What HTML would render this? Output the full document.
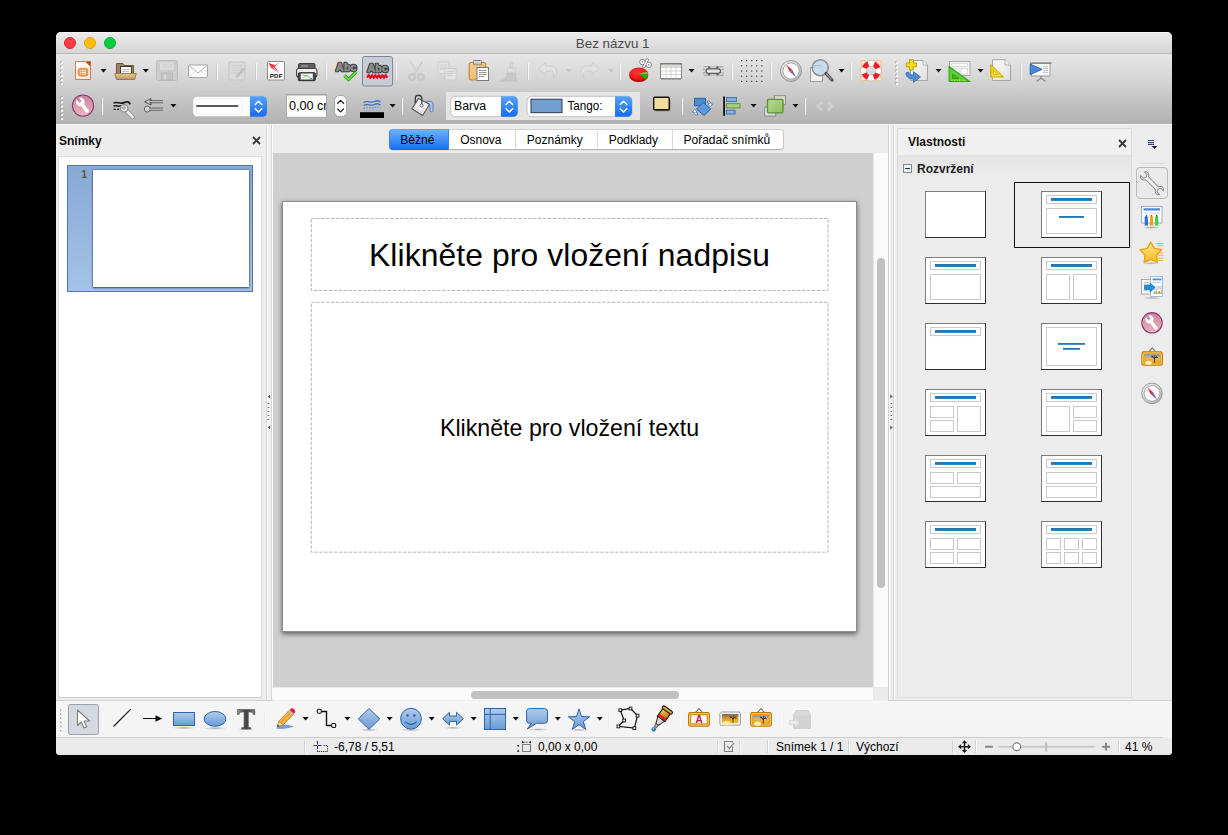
<!DOCTYPE html>
<html lang="cs">
<head>
<meta charset="utf-8">
<title>Bez názvu 1</title>
<style>
*{box-sizing:border-box;margin:0;padding:0}
html,body{width:1228px;height:835px;background:#000;overflow:hidden}
body{font-family:"Liberation Sans",sans-serif;font-size:12px;color:#000;position:relative}
.abs{position:absolute}
#win{position:absolute;left:56px;top:32px;width:1116px;height:723px;background:#ededed;border-radius:5px 5px 4px 4px;overflow:hidden}
/* everything inside #win is positioned in page coordinates via this shim */
#pg{position:absolute;left:-56px;top:-32px;width:1228px;height:835px}
#titlebar{left:56px;top:32px;width:1116px;height:22px;background:linear-gradient(#ebebeb,#d5d5d5);border-bottom:1px solid #b9b9b9;border-top:1px solid #f4f4f4}
#title{left:54.700px;top:32.500px;width:1116px;height:22px;line-height:22px;text-align:center;font-size:13.400px;color:#4b4b4b}
.tl{width:12px;height:12px;border-radius:6px;top:37px}
#toolbars{left:56px;top:54px;width:1116px;height:70px;background:linear-gradient(#e6e6e6 0%,#d6d6d6 35%,#c2c2c2 70%,#b2b2b2 100%)}
.sep{width:1px;background:#f4f4f4;box-shadow:-1px 0 0 rgba(0,0,0,.10)}
.dd{width:0;height:0;border-left:3.5px solid transparent;border-right:3.5px solid transparent;border-top:4px solid #111}
.dd.dis{border-top-color:#aaa}
.grip{width:3px;background-image:radial-gradient(circle,#fff 0.9px,rgba(0,0,0,0) 1.1px);background-size:3px 3px}
svg{position:absolute;overflow:visible}
.tabt{top:130px;height:21px;line-height:21px;text-align:center;font-size:12px;color:#000;margin-left:-1.200px}
.ssep{top:740px;width:1px;height:13px;background:#d2d2d2;box-shadow:1px 0 0 #fbfbfb}
.st{top:739.500px;height:15px;line-height:15px;font-size:12px;color:#000;white-space:nowrap}
.ph{border:1px dashed #c8c8c8}
</style>
</head>
<body>
<div id="win"><div id="pg">

<!-- ===== title bar ===== -->
<div id="titlebar" class="abs"></div>
<div id="title" class="abs">Bez názvu 1</div>
<div class="abs tl" style="left:64px;background:#fc3c45;border:1px solid #e3242f"></div>
<div class="abs tl" style="left:84px;background:#fdbd08;border:1px solid #e2a005"></div>
<div class="abs tl" style="left:104px;background:#05cf40;border:1px solid #12ad2e"></div>

<!-- ===== toolbars ===== -->
<div id="toolbars" class="abs"></div>
<svg style="left:0;top:0" width="1228" height="835" viewBox="0 0 1228 835"><defs>
<linearGradient id="gdoc" x1="0" y1="0" x2="1" y2="1"><stop offset="0" stop-color="#fff"/><stop offset="1" stop-color="#fcebdf"/></linearGradient>
<linearGradient id="gfold" x1="0" y1="0" x2="0" y2="1"><stop offset="0" stop-color="#e0cba4"/><stop offset="1" stop-color="#b69763"/></linearGradient>
<linearGradient id="gpap" x1="0" y1="0" x2="1" y2="1"><stop offset="0" stop-color="#fdfdfd"/><stop offset="1" stop-color="#dedede"/></linearGradient>
<linearGradient id="gblue" x1="0" y1="0" x2="0" y2="1"><stop offset="0" stop-color="#55a2fc"/><stop offset="1" stop-color="#176bf5"/></linearGradient>
<linearGradient id="gpink" x1="0" y1="0" x2="0" y2="1"><stop offset="0" stop-color="#c8869f"/><stop offset="1" stop-color="#ecb2c0"/></linearGradient>
<linearGradient id="gclip" x1="0" y1="0" x2="1" y2="1"><stop offset="0" stop-color="#f5cf8e"/><stop offset="1" stop-color="#e9b35c"/></linearGradient>
<linearGradient id="ggreen" x1="0" y1="0" x2="1" y2="1"><stop offset="0" stop-color="#b5d98f"/><stop offset="1" stop-color="#8fc063"/></linearGradient>
<linearGradient id="gbl2" x1="0" y1="0" x2="0" y2="1"><stop offset="0" stop-color="#8fb8e6"/><stop offset="1" stop-color="#5e95d3"/></linearGradient>
<radialGradient id="gpie" cx=".4" cy=".35" r=".7"><stop offset="0" stop-color="#ff3a3a"/><stop offset="1" stop-color="#e30606"/></radialGradient>
<linearGradient id="gsilver" x1="0" y1="0" x2="1" y2="1"><stop offset="0" stop-color="#f4f4f4"/><stop offset="1" stop-color="#a9a9a9"/></linearGradient>
</defs>
<rect x="60.3" y="61.3" width="2" height="2" fill="#777" fill-opacity=".55"/><rect x="61.1" y="62.1" width="2" height="2" fill="#fff"/><rect x="60.3" y="65.5" width="2" height="2" fill="#777" fill-opacity=".55"/><rect x="61.1" y="66.3" width="2" height="2" fill="#fff"/><rect x="60.3" y="69.7" width="2" height="2" fill="#777" fill-opacity=".55"/><rect x="61.1" y="70.5" width="2" height="2" fill="#fff"/><rect x="60.3" y="73.9" width="2" height="2" fill="#777" fill-opacity=".55"/><rect x="61.1" y="74.7" width="2" height="2" fill="#fff"/><rect x="60.3" y="78.1" width="2" height="2" fill="#777" fill-opacity=".55"/><rect x="61.1" y="78.9" width="2" height="2" fill="#fff"/><rect x="60.3" y="82.3" width="2" height="2" fill="#777" fill-opacity=".55"/><rect x="61.1" y="83.1" width="2" height="2" fill="#fff"/>
<g transform="translate(75 61)"><path d="M.5.5H10.500L15.500 5.500V18.500H.5z" fill="url(#gdoc)" stroke="#c8703a" stroke-width=".9"/><path d="M10.500 .2H15.800V5.500z" fill="#c2470d"/><rect x="3" y="7.200" width="10" height="8" rx="2.200" fill="#f19459" stroke="#e87a3a" stroke-width=".6"/><path d="M6.500 9.700H11M6.500 11.400H11M6.500 13.100H11" stroke="#fff" stroke-width=".9"/><path d="M4.800 9.700h.9M4.800 11.400h.9M4.800 13.100h.9" stroke="#fff" stroke-width=".9"/></g>
<path d="M100.5 69h6l-3 3.600z" fill="#0a0a0a"/>
<g transform="translate(114 62)"><path d="M2.500 1.500H9L10.500 3.500H19.500V16H2.500z" fill="#9c825f" stroke="#6e5633"/><rect x="6.500" y="4.500" width="11" height="9.500" fill="#fff" stroke="#3c3c3c"/><path d="M8.500 7.500H15.500M8.500 9.500H15.500M8.500 11.500H15.500" stroke="#b9c2b5" stroke-width="1"/><path d="M.8 11.500H22.200L20.600 17.500H2.400z" fill="url(#gfold)" stroke="#a87a2e"/></g>
<path d="M142.8 69h6l-3 3.600z" fill="#0a0a0a"/>
<g transform="translate(156 60)"><rect x=".5" y=".5" width="21" height="20" rx="2" fill="#cdcdcd" stroke="#bcbcbc"/><rect x="3.500" y="1.500" width="15" height="9" rx="1" fill="#dadada" stroke="#c6c6c6" stroke-width=".7"/><path d="M6 4.500H16M6 6.500H16" stroke="#cfcfcf" stroke-width=".8"/><rect x="5.500" y="13" width="11" height="7" fill="#c3c3c3" stroke="#b3b3b3" stroke-width=".7"/><rect x="7.500" y="14.500" width="2.500" height="5" fill="#d6d6d6"/></g>
<g transform="translate(188 64.5)"><rect x=".5" y=".5" width="19" height="12.500" rx="1" fill="#fbfbfb" stroke="#a6a6a6"/><path d="M1.500 1.500L10 8.500L18.500 1.500" fill="none" stroke="#b3b3b3" stroke-width="1"/><path d="M1.500 12L7 6.500M18.500 12L13 6.500" stroke="#dcdcdc" stroke-width=".8"/></g>
<path d="M217.5 63V80" stroke="#f6f6f6" stroke-width="1.200"/><path d="M216.5 63V80" stroke="#000" stroke-opacity=".07" stroke-width="1"/>
<g transform="translate(228.5 61.5)"><rect x=".5" y=".5" width="16" height="18" rx="1" fill="#dadada" stroke="#c5c5c5"/><path d="M3 4H13M3 6.500H13M3 9H11M3 11.500H9" stroke="#c9c9c9" stroke-width=".8"/><path d="M8 14L14.500 6.500L16 8L9.500 15.200L7.500 15.800z" fill="#c4c4c4" stroke="#b4b4b4" stroke-width=".6"/></g>
<path d="M256.5 63V80" stroke="#f6f6f6" stroke-width="1.200"/><path d="M255.5 63V80" stroke="#000" stroke-opacity=".07" stroke-width="1"/>
<g transform="translate(267 61)"><rect x=".5" y=".5" width="17" height="18.500" rx="1" fill="#fdfdfd" stroke="#8a8a82"/><path d="M1.500 2.200C6 3.500 9 6 12 11.500C9.500 8 6 5.500 1.500 2.200z" fill="#e6001f"/><path d="M1.500 2L9.500 4.500L6 6.500L12.500 12L4 7z" fill="#f0102a" fill-opacity=".75"/><path d="M5 6.500L11.500 2.200" stroke="#f55" stroke-width="1" stroke-opacity=".7"/><text x="9.300" y="17.300" font-family="Liberation Sans" font-weight="bold" font-size="6.200" text-anchor="middle" fill="#111" letter-spacing=".3">PDF</text></g>
<g transform="translate(296 63)"><rect x="2.500" y=".5" width="16.500" height="7" rx="1.200" fill="#5d615f" stroke="#3a3d3c"/><path d="M5.500 3H12" stroke="#b9bdbb" stroke-width="1.300" stroke-dasharray="1.200 .8"/><rect x=".6" y="5.500" width="20.300" height="8.500" rx="2" fill="#efefef" stroke="#3f4241" stroke-width="1.100"/><rect x="2.300" y="9.700" width="17" height="8" rx="1.200" fill="#484b4a" stroke="#2b2d2c"/><rect x="4.800" y="10.500" width="12" height="6" fill="#f7f8f6"/><path d="M6.500 11.800L14.500 14.500M7 14.500L12 12" stroke="#86cf7a" stroke-width="1"/><rect x="13.800" y="15" width="2.200" height="1.200" fill="#3a9ae8"/></g>
<path d="M326.5 63V80" stroke="#f6f6f6" stroke-width="1.200"/><path d="M325.5 63V80" stroke="#000" stroke-opacity=".07" stroke-width="1"/>
<text x="336.1" y="71" font-family="Liberation Sans" font-weight="bold" font-size="10.6" letter-spacing="0.15" fill="#2b2d2c" stroke="#2b2d2c" stroke-width="2.7" stroke-linejoin="round">Abc</text><text x="336.1" y="71" font-family="Liberation Sans" font-weight="bold" font-size="10.6" letter-spacing="0.15" fill="#8b8e8c" stroke="#8b8e8c" stroke-width=".8">Abc</text><path d="M344.500 75.500L348.500 79.500L356 72.200" fill="none" stroke="#2a9a1a" stroke-width="3.200"/><path d="M344.500 75.500L348.500 79.500L356 72.200" fill="none" stroke="#6fe04a" stroke-width="1.600"/>
<rect x="362.500" y="56.500" width="30" height="29.500" rx="2" fill="#c8ccd4" stroke="#7f8695"/>
<text x="367.5" y="72" font-family="Liberation Sans" font-weight="bold" font-size="10.6" letter-spacing="0.15" fill="#2b2d2c" stroke="#2b2d2c" stroke-width="2.7" stroke-linejoin="round">Abc</text><text x="367.5" y="72" font-family="Liberation Sans" font-weight="bold" font-size="10.6" letter-spacing="0.15" fill="#8b8e8c" stroke="#8b8e8c" stroke-width=".8">Abc</text><path d="M367 77.700l1.700-2.400 1.700 2.400 1.700-2.400 1.700 2.400 1.700-2.400 1.700 2.400 1.700-2.400 1.700 2.400 1.700-2.400 1.700 2.400 1.700-2.400 1.700 2.400" fill="none" stroke="#e8001c" stroke-width="2"/>
<path d="M396.5 63V80" stroke="#f6f6f6" stroke-width="1.200"/><path d="M395.5 63V80" stroke="#000" stroke-opacity=".07" stroke-width="1"/>
<g transform="translate(408 61)"><path d="M2.500 .5L10.500 13M14.500 .5L6.500 13" stroke="#cfcfcf" stroke-width="1.600" fill="none"/><circle cx="4" cy="16" r="2.900" fill="none" stroke="#c4c4c4" stroke-width="1.900"/><circle cx="13" cy="16" r="2.900" fill="none" stroke="#c4c4c4" stroke-width="1.900"/></g>
<g transform="translate(437.5 61.5)"><rect x=".5" y=".5" width="11" height="11.500" fill="#e3e3e3" stroke="#cdcdcd"/><path d="M2.500 3.500H9.500M2.500 5.500H9.500M2.500 7.500H8" stroke="#c6c6c6" stroke-width=".8"/><rect x="7.500" y="7" width="11" height="11.500" fill="#e3e3e3" stroke="#cdcdcd"/><path d="M9.500 10H16.500M9.500 12H16.500M9.500 14H15" stroke="#c6c6c6" stroke-width=".8"/></g>
<g transform="translate(468.5 60)"><rect x=".7" y="2.500" width="16.500" height="17.500" rx="2" fill="url(#gclip)" stroke="#c4892e" stroke-width="1.200"/><rect x="5" y=".5" width="8" height="4" rx="1" fill="#d9d9d9" stroke="#777"/><rect x="4.500" y="3.500" width="9" height="1.700" fill="#9a9a9a"/><rect x="8.500" y="7.500" width="11.500" height="13" fill="#fdfdfd" stroke="#7a7a7a"/><path d="M10.500 10.500H18M10.500 12.500H18M10.500 14.500H18M10.500 16.500H15.500" stroke="#8d8d8d" stroke-width=".9"/></g>
<g transform="translate(499 61)"><path d="M12.500 .5L14.300 2.500L13.800 7H10.800L11 2.500z" fill="#d6d6d6" stroke="#c8c8c8" stroke-width=".6"/><path d="M8.500 7H16.500V12H8.500z" fill="#dedede" stroke="#cacaca" stroke-width=".7"/><path d="M8.500 12H16.500C16.500 15 17 18 17.500 20.500C12 19.500 6 20.500 .5 20.500C5.500 19 8.500 16 8.500 12z" fill="#c8c8c8" stroke="#bdbdbd" stroke-width=".5"/></g>
<path d="M528.5 63V80" stroke="#f6f6f6" stroke-width="1.200"/><path d="M527.5 63V80" stroke="#000" stroke-opacity=".07" stroke-width="1"/>
<g transform="translate(537.5 62)"><path d="M8 .8L.8 6.500L8 12.200V9.200H13C16.500 9.200 17.500 11.500 15.500 15.800C21 12.500 20.500 4 13 3.800H8z" fill="#e1e1e1" stroke="#cbcbcb" stroke-width=".9"/></g>
<path d="M566 69h6l-3 3.600z" fill="#c6c6c6"/>
<g transform="translate(578.5 62)"><path d="M8 .8L.8 6.500L8 12.200V9.200H13C16.500 9.200 17.500 11.500 15.500 15.800C21 12.500 20.500 4 13 3.800H8z" transform="translate(21.500 0) scale(-1 1)" fill="#e1e1e1" stroke="#cbcbcb" stroke-width=".9"/></g>
<path d="M608 69h6l-3 3.600z" fill="#c6c6c6"/>
<path d="M620.5 63V80" stroke="#f6f6f6" stroke-width="1.200"/><path d="M619.5 63V80" stroke="#000" stroke-opacity=".07" stroke-width="1"/>
<ellipse cx="638.700" cy="75.800" rx="9.500" ry="6.300" fill="#b80404"/><ellipse cx="638.700" cy="74" rx="9.500" ry="6.500" fill="url(#gpie)"/><path d="M638.500 73.500L647.900 73.800C648.300 76 647 78.500 645.500 79.200z" fill="#22b010"/><path d="M638.500 73.500L647.900 73.800L647.200 72z" fill="#7fe85a"/>
<g fill="none" stroke="#767676" stroke-width="3" stroke-linecap="round"><circle cx="642.4" cy="62" r="1.5"/><circle cx="648.7" cy="64.7" r="1.5"/><path d="M647.3 59.9L643.8 66.8"/></g><g fill="none" stroke="#fff" stroke-width="1.5" stroke-linecap="round"><circle cx="642.4" cy="62" r="1.5"/><circle cx="648.7" cy="64.7" r="1.5"/><path d="M647.3 59.9L643.8 66.8"/></g>
<g transform="translate(660 63)"><rect x=".5" y=".5" width="21" height="15" fill="#fff" stroke="#8b8b86" stroke-width="1"/><rect x="1" y="1" width="20" height="3" fill="#dcdcd8"/><path d="M.5 1H21.5" stroke="#6f6f6a" stroke-width="1"/><path d="M1 4.500H21M1 8H21M1 11.500H21M6 1V15.500M11 1V15.500M16 1V15.500" stroke="#cbcbc6" stroke-width=".8"/><path d="M.5 16.300H21.500" stroke="#777" stroke-opacity=".6"/></g>
<path d="M688.6 69h6l-3 3.600z" fill="#0a0a0a"/>
<path d="M703.5 66.7H708M718.5 66.7H723.5M703.5 75.2H708M718.5 75.2H723.5" stroke="#6b6f6c" stroke-width="1.1" stroke-opacity=".6"/><path d="M708 66.7H718.5M708 75.2H718.5" stroke="#6b6f6c" stroke-width="1.1" stroke-opacity=".35"/><path d="M703 69.3H705.3M721.2 69.3H724M703 72.9H705.3M721.2 72.9H724" stroke="#9a9d9a" stroke-width="1"/><path d="M708.3 66.7L710.6 69M718.2 66.7L715.9 69M708.3 75.2L710.6 73.2M718.2 75.2L715.9 73.2" stroke="#5e625f" stroke-width="1.7"/><rect x="706" y="68.8" width="14.5" height="4.6" rx="2.3" fill="#e6e6e6" stroke="#5a5e5b" stroke-width="1.3"/>
<path d="M732.5 63V80" stroke="#f6f6f6" stroke-width="1.200"/><path d="M731.5 63V80" stroke="#000" stroke-opacity=".07" stroke-width="1"/>
<rect x="741.0" y="60.0" width="1.200" height="1.200" fill="#3e3e3e"/><rect x="741.0" y="65.2" width="1.200" height="1.200" fill="#3e3e3e"/><rect x="741.0" y="70.4" width="1.200" height="1.200" fill="#3e3e3e"/><rect x="741.0" y="75.6" width="1.200" height="1.200" fill="#3e3e3e"/><rect x="741.0" y="80.8" width="1.200" height="1.200" fill="#3e3e3e"/><rect x="746.0" y="60.0" width="1.200" height="1.200" fill="#3e3e3e"/><rect x="746.0" y="65.2" width="1.200" height="1.200" fill="#3e3e3e"/><rect x="746.0" y="70.4" width="1.200" height="1.200" fill="#3e3e3e"/><rect x="746.0" y="75.6" width="1.200" height="1.200" fill="#3e3e3e"/><rect x="746.0" y="80.8" width="1.200" height="1.200" fill="#3e3e3e"/><rect x="751.1" y="60.0" width="1.200" height="1.200" fill="#3e3e3e"/><rect x="751.1" y="65.2" width="1.200" height="1.200" fill="#3e3e3e"/><rect x="751.1" y="70.4" width="1.200" height="1.200" fill="#3e3e3e"/><rect x="751.1" y="75.6" width="1.200" height="1.200" fill="#3e3e3e"/><rect x="751.1" y="80.8" width="1.200" height="1.200" fill="#3e3e3e"/><rect x="756.1" y="60.0" width="1.200" height="1.200" fill="#3e3e3e"/><rect x="756.1" y="65.2" width="1.200" height="1.200" fill="#3e3e3e"/><rect x="756.1" y="70.4" width="1.200" height="1.200" fill="#3e3e3e"/><rect x="756.1" y="75.6" width="1.200" height="1.200" fill="#3e3e3e"/><rect x="756.1" y="80.8" width="1.200" height="1.200" fill="#3e3e3e"/><rect x="761.2" y="60.0" width="1.200" height="1.200" fill="#3e3e3e"/><rect x="761.2" y="65.2" width="1.200" height="1.200" fill="#3e3e3e"/><rect x="761.2" y="70.4" width="1.200" height="1.200" fill="#3e3e3e"/><rect x="761.2" y="75.6" width="1.200" height="1.200" fill="#3e3e3e"/><rect x="761.2" y="80.8" width="1.200" height="1.200" fill="#3e3e3e"/>
<path d="M771.5 63V80" stroke="#f6f6f6" stroke-width="1.200"/><path d="M770.5 63V80" stroke="#000" stroke-opacity=".07" stroke-width="1"/>
<circle cx="791" cy="71" r="10.5" fill="url(#gsilver)" stroke="#8e8e8e" stroke-width=".8"/><circle cx="791" cy="71" r="8.1" fill="#fcfcfc" stroke="#a5a5a5" stroke-width=".9"/><path d="M786.2 64.8L792.2 70.1L789.9 72.1z" fill="#e8222a"/><path d="M795.8 77.2L792.2 70.1L789.9 72.1z" fill="#5b7fd0"/><path d="M795.8 77.2L792.2 70.1L791 71z" fill="#b0529a"/>
<g transform="translate(810 59)"><path d="M.5 8.500H9L12.500 12V22.500H.5z" fill="#f1f1f1" stroke="#9c9c9c"/><circle cx="10.300" cy="8.700" r="8" fill="#c6d9ee" fill-opacity=".85" stroke="#8a8f92" stroke-width="1.600"/><path d="M4 6.500H11L13 8.500" fill="none" stroke="#a9bdd4" stroke-width=".9"/><path d="M16 14.500L22 21" stroke="#4b4b4b" stroke-width="3.200" stroke-linecap="round"/><path d="M16.500 15L21.500 20.500" stroke="#a0a0a0" stroke-width="1.200" stroke-linecap="round" stroke-dasharray="1 1"/></g>
<path d="M838.5 69h6l-3 3.600z" fill="#0a0a0a"/>
<path d="M851.5 63V80" stroke="#f6f6f6" stroke-width="1.200"/><path d="M850.5 63V80" stroke="#000" stroke-opacity=".07" stroke-width="1"/>
<circle cx="871" cy="70.700" r="10.400" fill="#fde6c8" stroke="#f0b060" stroke-width=".8" fill-opacity=".0"/><circle cx="863.3" cy="63" r="2.700" fill="#fbe7cf" stroke="#f1b56a" stroke-width=".9"/><circle cx="878.7" cy="63" r="2.700" fill="#fbe7cf" stroke="#f1b56a" stroke-width=".9"/><circle cx="863.3" cy="78.4" r="2.700" fill="#fbe7cf" stroke="#f1b56a" stroke-width=".9"/><circle cx="878.7" cy="78.4" r="2.700" fill="#fbe7cf" stroke="#f1b56a" stroke-width=".9"/><circle cx="871" cy="70.700" r="7.300" fill="none" stroke="#fff" stroke-width="5.600"/><circle cx="871" cy="70.700" r="7.300" fill="none" stroke="#ee1c24" stroke-width="5.600" stroke-dasharray="5.730 5.730" stroke-dashoffset="-2.870"/><circle cx="871" cy="70.700" r="10.200" fill="none" stroke="#c9c9c9" stroke-width=".7"/><circle cx="871" cy="70.700" r="4.400" fill="none" stroke="#bdbdbd" stroke-width=".8"/>
<rect x="895.3" y="61.3" width="2" height="2" fill="#777" fill-opacity=".55"/><rect x="896.1" y="62.1" width="2" height="2" fill="#fff"/><rect x="895.3" y="65.5" width="2" height="2" fill="#777" fill-opacity=".55"/><rect x="896.1" y="66.3" width="2" height="2" fill="#fff"/><rect x="895.3" y="69.7" width="2" height="2" fill="#777" fill-opacity=".55"/><rect x="896.1" y="70.5" width="2" height="2" fill="#fff"/><rect x="895.3" y="73.9" width="2" height="2" fill="#777" fill-opacity=".55"/><rect x="896.1" y="74.7" width="2" height="2" fill="#fff"/><rect x="895.3" y="78.1" width="2" height="2" fill="#777" fill-opacity=".55"/><rect x="896.1" y="78.9" width="2" height="2" fill="#fff"/><rect x="895.3" y="82.3" width="2" height="2" fill="#777" fill-opacity=".55"/><rect x="896.1" y="83.1" width="2" height="2" fill="#fff"/>
<g transform="translate(905 59)"><path d="M5.500 1.500H18L22.500 6V21.500H5.500z" fill="url(#gpap)" stroke="#a5a5a5"/><path d="M18 1.500V6H22.500" fill="#f6f6f6" stroke="#a5a5a5" stroke-width=".8"/><path d="M1 11.500C1 15 3.500 17.500 8.500 17.500V20.800L15.500 15.500L8.500 10.200V13.500C5.500 13.500 4 12.500 3.800 10.500z" transform="translate(0 2.500)" fill="#4b8fd6" stroke="#2c63a8" stroke-width=".8"/><path d="M4.500 .7H8.300V4H11.600V7.800H8.300V11H4.500V7.800H1.200V4H4.500z" fill="#f6dc1e" stroke="#b59b00" stroke-width=".9"/></g>
<path d="M935.6 69h6l-3 3.600z" fill="#0a0a0a"/>
<g transform="translate(948.5 61)"><rect x="1" y=".5" width="20.500" height="14" fill="#f4f4f4" stroke="#ababab"/><rect x="3.500" y="2.500" width="15.500" height="3" fill="#fbfbfb" stroke="#d0d0d0" stroke-width=".7"/><rect x="3.500" y="7.500" width="7" height="5.500" fill="#fbfbfb" stroke="#d0d0d0" stroke-width=".7"/><rect x="12.500" y="7.500" width="6.500" height="5.500" fill="#fbfbfb" stroke="#d0d0d0" stroke-width=".7"/><path d="M.6 5.500L21 20.500H.6z" fill="#5fd038" stroke="#2fa414" stroke-width="1.100"/><path d="M4 13L10.500 17.500H4z" fill="#42b322" stroke="#2a8f10" stroke-width=".7"/><path d="M3 19.300H17" stroke="#d8e85a" stroke-width="1" stroke-dasharray="1 1.500"/></g>
<path d="M977.6 69h6l-3 3.600z" fill="#0a0a0a"/>
<g transform="translate(990 59)"><path d="M2.500 .7H15L20.500 6V21.500H2.500z" fill="url(#gpap)" stroke="#a5a5a5"/><path d="M15 .7V6H20.500" fill="#f4f4f4" stroke="#a5a5a5" stroke-width=".8"/><path d="M.8 5.500L13.500 18H.8z" fill="#f1d420" stroke="#c9a400" stroke-width="1"/><path d="M3.500 11.500L7.500 15.500H3.500z" fill="#f8e98a" stroke="#c9a400" stroke-width=".6"/><path d="M2.500 16.800H10" stroke="#fff6b0" stroke-width=".8" stroke-dasharray="1 1.200"/></g>
<path d="M1021.5 63V80" stroke="#f6f6f6" stroke-width="1.200"/><path d="M1020.5 63V80" stroke="#000" stroke-opacity=".07" stroke-width="1"/>
<g transform="translate(1029.5 62)"><rect x="2" y="1.500" width="18.500" height="12.500" fill="#f8f8f8" stroke="#9a9a98"/><rect x=".5" y=".3" width="21.500" height="1.700" fill="#8c8c8a"/><path d="M13.500 4.500H18.500M13.500 6.500H18.500M13.500 8.500H18.500M13.500 10.500H18.500" stroke="#b9b9b9" stroke-width=".8"/><path d="M.7 2.200L12.500 7.300L.7 12.600z" fill="#4a8ad8" stroke="#1e5fb4" stroke-width=".9"/><path d="M11.500 14V16.500M11.500 16L7 19.500M11.500 16L16 19.500" stroke="#8a8a88" stroke-width="1.300" fill="none"/></g>

<rect x="60.3" y="96.3" width="2" height="2" fill="#777" fill-opacity=".55"/><rect x="61.1" y="97.1" width="2" height="2" fill="#fff"/><rect x="60.3" y="100.5" width="2" height="2" fill="#777" fill-opacity=".55"/><rect x="61.1" y="101.3" width="2" height="2" fill="#fff"/><rect x="60.3" y="104.7" width="2" height="2" fill="#777" fill-opacity=".55"/><rect x="61.1" y="105.5" width="2" height="2" fill="#fff"/><rect x="60.3" y="108.9" width="2" height="2" fill="#777" fill-opacity=".55"/><rect x="61.1" y="109.7" width="2" height="2" fill="#fff"/><rect x="60.3" y="113.1" width="2" height="2" fill="#777" fill-opacity=".55"/><rect x="61.1" y="113.9" width="2" height="2" fill="#fff"/><rect x="60.3" y="117.3" width="2" height="2" fill="#777" fill-opacity=".55"/><rect x="61.1" y="118.1" width="2" height="2" fill="#fff"/>
<circle cx="83" cy="105.6" r="10.6" fill="url(#gpink)" stroke="#8b3c72" stroke-width="1.100"/><g transform="translate(83 105.6) scale(1.0) rotate(-36)"><path d="M0 -3V6.800" stroke="#fff" stroke-width="3.500" stroke-linecap="round"/><circle cx="0" cy="-4.500" r="4.300" fill="#fff"/><path d="M0 -9.500V-4.300" stroke="#cd8ca4" stroke-width="2.900"/></g>
<path d="M102.5 98V115" stroke="#f6f6f6" stroke-width="1.200"/><path d="M101.5 98V115" stroke="#000" stroke-opacity=".07" stroke-width="1"/>
<path d="M113.500 103C117 101.300 120 104.200 124 102.600S128.800 101.800 130.300 104.300" fill="none" stroke="#1c1c1c" stroke-width="1.700"/><path d="M113.500 106.200C116 105 118.500 107 121.500 105.800" fill="none" stroke="#1c1c1c" stroke-width="1.500"/><path d="M113.500 109.400h2.200m1.300 0h2.200" stroke="#1c1c1c" stroke-width="1.300"/><path d="M126 110.300L132.600 117" stroke="#8e8e8e" stroke-width="4.600" stroke-linecap="round"/><path d="M126 110.300L132.600 117" stroke="#ececec" stroke-width="2.900" stroke-linecap="round"/><circle cx="124.200" cy="108.300" r="3.700" fill="#e6e6e6" stroke="#868686" stroke-width="1.200"/><circle cx="124" cy="108" r="1.300" fill="#bcbcbc" stroke="#858585" stroke-width=".7"/>
<g transform="translate(144 98.5)"><path d="M7 0L.6 3.300L7 6.600z" fill="#c9c9c9" stroke="#444" stroke-width=".9"/><path d="M5.500 2.400H19M5.500 4.200H19" stroke="#2e2e2e" stroke-width=".9"/><path d="M5.500 3.300H19" stroke="#d8d8d8" stroke-width=".9"/><circle cx="3.300" cy="10.600" r="2.900" fill="#d6d6d6" stroke="#555" stroke-width=".9"/><path d="M6 9.700H19M6 11.500H19" stroke="#2e2e2e" stroke-width=".9"/><path d="M6 10.600H19" stroke="#d8d8d8" stroke-width=".9"/></g>
<path d="M170.4 104h6l-3 3.600z" fill="#0a0a0a"/>
<rect x="192.8" y="96.3" width="74.2" height="20.4" rx="4.500" fill="#fff" stroke="#b5b5b5" stroke-width=".8"/><path d="M250 96.3H262.5a4.500 4.500 0 0 1 4.500 4.500V112.19999999999999a4.500 4.500 0 0 1 -4.500 4.500H250z" fill="url(#gblue)"/><path d="M255.2 104.5l3.300 -3.300l3.300 3.300M255.2 108.7l3.300 3.300l3.300 -3.300" fill="none" stroke="#fff" stroke-width="1.500" stroke-linecap="round" stroke-linejoin="round"/><rect x="196" y="98.500" width="46" height="15.500" fill="#fff" stroke="#ececec" stroke-width=".8"/><path d="M196.200 106H238.200" stroke="#5a5a5a" stroke-width="2"/>
<rect x="286.500" y="94.500" width="40" height="22.800" fill="#fff" stroke="#a9a9a9" stroke-width="1"/><path d="M287 95H326" stroke="#8f8f8f" stroke-width=".8"/>
<clipPath id="cpw"><rect x="287" y="95" width="39" height="22"/></clipPath><text clip-path="url(#cpw)" x="289" y="110.300" font-family="Liberation Sans" font-size="12.600" fill="#000">0,00 cm</text>
<rect x="334.600" y="95.500" width="12" height="21.200" rx="5" fill="#fdfdfd" stroke="#9d9d9d" stroke-width=".9"/><path d="M337.700 103.300l2.900 -2.900l2.900 2.900M337.700 109l2.900 2.900l2.900 -2.900" fill="none" stroke="#222" stroke-width="1.300" stroke-linecap="round" stroke-linejoin="round"/>
<g transform="translate(360 100)"><path d="M3.500 2.500C7 .3 11 3.300 14.500 1.500S18.500 1 20.500 2M3.500 5.500C7 3.300 11 6.300 14.500 4.500S18.500 4 20.500 5" fill="none" stroke="#3b78c4" stroke-width="1.300"/><path d="M3.500 8.500C7 6.500 11 9 14.500 7.500S18.500 7 20.500 8" fill="none" stroke="#5c92d4" stroke-width="1.100" stroke-dasharray="1.600 1.200"/><path d="M4 10.700H20" stroke="#7aa6dc" stroke-width=".9" stroke-dasharray="1 1.400"/><rect x="0" y="12.200" width="24" height="5.800" fill="#000"/></g>
<path d="M389.6 104h6l-3 3.600z" fill="#0a0a0a"/>
<path d="M402.5 98V115" stroke="#f6f6f6" stroke-width="1.200"/><path d="M401.5 98V115" stroke="#000" stroke-opacity=".07" stroke-width="1"/>
<g transform="translate(412 95)"><path d="M14 6.400H18.500Q21 6.400 21 9V15.600Q21 16.900 19.500 16.900Q18 16.900 18 15.600V10.500Q18 9.400 17 9.400H15z" fill="#a9c8f5" stroke="#5874bd" stroke-width=".9"/><path d="M6.400 3.600L17.500 9.200L10.600 20.500L-.1 13.800z" fill="#f0f0f0" stroke="#555" stroke-width="1.100" stroke-linejoin="round"/><path d="M2.500 12.500L9.500 17.500L12.500 13" fill="none" stroke="#dadada" stroke-width="1.500"/><path d="M3.300 8V3.500A3.250 3.250 0 0 1 9.800 3.500V10" fill="none" stroke="#3a4042" stroke-width="1.300"/><circle cx="9.600" cy="10.500" r="1.500" fill="#fff" stroke="#555" stroke-width=".9"/></g>
<rect x="446" y="92" width="194" height="28" fill="#e4e4e4"/>
<rect x="450.7" y="96.3" width="67" height="20.4" rx="4.500" fill="#fff" stroke="#b5b5b5" stroke-width=".8"/><path d="M501 96.3H513.2a4.500 4.500 0 0 1 4.500 4.500V112.19999999999999a4.500 4.500 0 0 1 -4.500 4.500H501z" fill="url(#gblue)"/><path d="M506.05 104.5l3.300 -3.300l3.300 3.300M506.05 108.7l3.300 3.300l3.300 -3.300" fill="none" stroke="#fff" stroke-width="1.500" stroke-linecap="round" stroke-linejoin="round"/><text x="454" y="110.300" font-family="Liberation Sans" font-size="12.300" fill="#000">Barva</text>
<rect x="527" y="96.3" width="105" height="20.4" rx="4.500" fill="#fff" stroke="#b5b5b5" stroke-width=".8"/><path d="M615 96.3H627.5a4.500 4.500 0 0 1 4.500 4.500V112.19999999999999a4.500 4.500 0 0 1 -4.500 4.500H615z" fill="url(#gblue)"/><path d="M620.2 104.5l3.300 -3.300l3.300 3.300M620.2 108.7l3.300 3.300l3.300 -3.300" fill="none" stroke="#fff" stroke-width="1.500" stroke-linecap="round" stroke-linejoin="round"/><rect x="531" y="99.200" width="31" height="13.500" fill="#729fcf" stroke="#2f3b4a" stroke-width="1"/><text x="567.500" y="110.300" font-family="Liberation Sans" font-size="12.300" fill="#000" textLength="35" lengthAdjust="spacingAndGlyphs">Tango:</text>
<rect x="655" y="98.800" width="15.500" height="12.500" rx="1" fill="#000" fill-opacity=".35"/><rect x="653.700" y="97.300" width="15.500" height="12.500" rx="1" fill="#eedd9c" stroke="#15130c" stroke-width="1.400"/>
<path d="M682.5 98V115" stroke="#f6f6f6" stroke-width="1.200"/><path d="M681.5 98V115" stroke="#000" stroke-opacity=".07" stroke-width="1"/>
<g transform="translate(691 97.5)"><rect x="3.500" y=".8" width="11" height="7.500" fill="#4f8bd0" stroke="#2b62a6" stroke-width="1"/><path d="M12.300 5L19.800 11.500L13 18L5.500 11.500z" fill="#5b97db" stroke="#2b62a6" stroke-width="1"/><path d="M16.500 3.500C19 3.500 20 5 20 6.500H21.800L19.300 9.200L16.800 6.500H18.300C18.300 5.800 17.800 5.300 16.500 5.300z" fill="#fff" stroke="#3a74bd" stroke-width=".8"/><path d="M6.500 17.500C4 17.500 3 16 3 14.500H1.200L3.700 11.800L6.200 14.500H4.700C4.700 15.200 5.200 15.700 6.500 15.700z" fill="#fff" stroke="#3a74bd" stroke-width=".8"/></g>
<g transform="translate(723 96.5)"><rect x=".2" y="0" width="1.800" height="19.300" fill="#111"/><rect x="3.500" y="1" width="10" height="4" fill="#85aedd" stroke="#3d6ea8" stroke-width=".9"/><rect x="3.500" y="7.200" width="13.500" height="4.200" fill="#a5d080" stroke="#5b8c33" stroke-width=".9"/><rect x="3.500" y="13.700" width="8.500" height="3.800" fill="#85aedd" stroke="#3d6ea8" stroke-width=".9"/></g>
<path d="M750.6 104h6l-3 3.600z" fill="#0a0a0a"/>
<g transform="translate(764 95)"><rect x="10.300" y=".7" width="11.200" height="9" fill="#dcdcdc" stroke="#8c8c8c" stroke-width="1"/><rect x=".7" y="12" width="11" height="9" fill="#dcdcdc" stroke="#8c8c8c" stroke-width="1"/><rect x="3.500" y="4.300" width="15.500" height="13.500" rx="1" fill="url(#ggreen)" stroke="#5f8f37" stroke-width="1.300"/></g>
<path d="M792.5 104h6l-3 3.600z" fill="#0a0a0a"/>
<path d="M805.5 98V115" stroke="#f6f6f6" stroke-width="1.200"/><path d="M804.5 98V115" stroke="#000" stroke-opacity=".07" stroke-width="1"/>
<g transform="translate(815 100.5)"><path d="M6.500 .5L.8 5.800L6.500 11.200L8.500 9L5 5.800L8.500 2.500z" fill="#d0d0d0" stroke="#c2c2c2" stroke-width=".7"/><path d="M13.500 .5L19.200 5.800L13.500 11.200L11.500 9L15 5.800L11.500 2.500z" fill="#d0d0d0" stroke="#c2c2c2" stroke-width=".7"/><path d="M5 5.800h2M13 5.800h2M6 4.800v2M14 4.800v2" stroke="#c2c2c2" stroke-width=".8"/></g>
</svg>

<!-- ===== left panel ===== -->

<div class="abs" style="left:56px;top:124px;width:210px;height:577px;background:#ededed"></div>
<div class="abs" style="left:59px;top:133.500px;font-size:12px;font-weight:bold;line-height:15px;color:#111">Snímky</div>
<svg style="left:251.500px;top:135.700px" width="9" height="9" viewBox="0 0 9 9"><path d="M1 1L8 8M8 1L1 8" stroke="#383838" stroke-width="1.8" fill="none"/></svg>
<div class="abs" style="left:58px;top:156px;width:204px;height:542px;background:#fff;border:1px solid #dcdcdc;border-bottom-color:#cfcfcf"></div>
<div class="abs" style="left:67px;top:165px;width:186px;height:127px;background:linear-gradient(#88a9d3,#a3c3e8);border:1px solid #4f76ad"></div>
<div class="abs" style="left:93px;top:170px;width:155.500px;height:117px;background:#fff;box-shadow:0 1px 2px rgba(0,0,0,.55),0 0 1.500px rgba(0,0,0,.6)"></div>
<div class="abs" style="left:75px;top:166.500px;width:12px;font-size:10.500px;font-weight:bold;color:#555;text-align:right;line-height:14px">1</div>
<!-- splitter left -->
<div class="abs" style="left:266px;top:124px;width:7px;height:577px;background:#f1f1f1"></div>
<div class="abs" style="left:266px;top:124px;width:1px;height:577px;background:#d8d8d8"></div>
<div class="abs" style="left:267px;top:124px;width:1px;height:577px;background:#fbfbfb"></div>
<div class="abs" style="left:271px;top:124px;width:1px;height:577px;background:#d6d6d6"></div>
<div class="abs" style="left:272px;top:124px;width:1px;height:577px;background:#fbfbfb"></div>
<svg style="left:266px;top:393px" width="6" height="38" viewBox="0 0 6 38"><path d="M4.2 1.5L1.6 3.5L4.2 5.5zM4.2 32.5L1.600 34.5L4.2 36.5z" fill="#5a5a5a"/><rect x="1.6" y="10" width="1.6" height="1" fill="#6e6e6e"/><rect x="2.4" y="11" width="1.6" height="1" fill="#fff"/><rect x="1.6" y="14" width="1.6" height="1" fill="#6e6e6e"/><rect x="2.4" y="15" width="1.6" height="1" fill="#fff"/><rect x="1.6" y="18" width="1.6" height="1" fill="#6e6e6e"/><rect x="2.4" y="19" width="1.6" height="1" fill="#fff"/><rect x="1.6" y="22" width="1.6" height="1" fill="#6e6e6e"/><rect x="2.4" y="23" width="1.6" height="1" fill="#fff"/><rect x="1.6" y="26" width="1.6" height="1" fill="#6e6e6e"/><rect x="2.4" y="27" width="1.6" height="1" fill="#fff"/></svg>


<!-- ===== center ===== -->

<div class="abs" style="left:273px;top:124px;width:615px;height:29px;background:#ececec"></div>
<div class="abs" style="left:273px;top:153px;width:600px;height:534px;background:#cfcfcf"></div>
<!-- tabs -->
<div class="abs" style="left:388.500px;top:129px;width:395.500px;height:21px;border-radius:4px;background:#fff;border:1px solid #c6c6c6;border-top-color:#cfcfcf;border-bottom-color:#b4b4b4;box-shadow:0 0.5px 0.5px rgba(0,0,0,.08)"></div>
<div class="abs" style="left:388.500px;top:129px;width:60.500px;height:21px;border-radius:4px 0 0 4px;background:linear-gradient(#6ab2fd,#1a70f6);border:1px solid #3a80ea;border-top-color:#5aa2f6;border-bottom-color:#1a62e6"></div>
<div class="abs tabt" style="left:388px;width:61px">Běžné</div>
<div class="abs tabt" style="left:449px;width:66px">Osnova</div>
<div class="abs tabt" style="left:515px;width:82px">Poznámky</div>
<div class="abs tabt" style="left:597px;width:75px">Podklady</div>
<div class="abs tabt" style="left:672px;width:112px">Pořadač snímků</div>
<div class="abs" style="left:515px;top:130px;width:1px;height:19px;background:#d9d9d9"></div>
<div class="abs" style="left:597px;top:130px;width:1px;height:19px;background:#d9d9d9"></div>
<div class="abs" style="left:672px;top:130px;width:1px;height:19px;background:#d9d9d9"></div>
<!-- slide -->
<div class="abs" style="left:283px;top:202px;width:573px;height:429px;background:#fff;box-shadow:0 0 0 1px #8b8d93,0 2px 5px 1px rgba(0,0,0,.55)"></div>
<svg style="left:0;top:0" width="1228" height="835" viewBox="0 0 1228 835"><rect x="311.3" y="218.5" width="516.7" height="72" fill="none" stroke="#b6b6b6" stroke-width="1" stroke-dasharray="3.4 1.53"/><rect x="311.3" y="302.3" width="516.7" height="249.9" fill="none" stroke="#b6b6b6" stroke-width="1" stroke-dasharray="3.4 1.53"/></svg>

<div class="abs" style="left:311px;top:236.500px;width:517px;text-align:center;font-size:31.800px;letter-spacing:0.120px;line-height:36px;color:#000">Klikněte pro vložení nadpisu</div>
<div class="abs" style="left:311px;top:415px;width:517px;text-align:center;font-size:23.200px;line-height:26px;color:#000">Klikněte pro vložení textu</div>
<!-- scrollbars -->
<div class="abs" style="left:873px;top:153px;width:15px;height:534px;background:#fafafa;border-left:1px solid #e8e8e8"></div>
<div class="abs" style="left:877px;top:258px;width:8px;height:330px;border-radius:4px;background:#c1c1c1"></div>
<div class="abs" style="left:273px;top:687px;width:600px;height:14px;background:#fafafa;border-top:1px solid #e8e8e8"></div>
<div class="abs" style="left:873px;top:687px;width:15px;height:14px;background:#ebebeb"></div>
<div class="abs" style="left:471px;top:691px;width:208px;height:8px;border-radius:4px;background:#c1c1c1"></div>
<!-- splitter right -->
<div class="abs" style="left:888px;top:124px;width:8px;height:577px;background:#ececec"></div>
<div class="abs" style="left:888px;top:124px;width:1px;height:577px;background:#d2d2d2"></div>
<div class="abs" style="left:889px;top:124px;width:1px;height:577px;background:#fbfbfb"></div>
<div class="abs" style="left:893px;top:124px;width:1px;height:577px;background:#d6d6d6"></div>
<div class="abs" style="left:894px;top:124px;width:1px;height:577px;background:#fbfbfb"></div>
<svg style="left:889px;top:393px" width="6" height="38" viewBox="0 0 6 38"><path d="M1.2 1.5L3.8 3.5L1.2 5.5zM1.2 32.5L3.800 34.5L1.2 36.5z" fill="#5a5a5a"/><rect x="1.6" y="10" width="1.6" height="1" fill="#6e6e6e"/><rect x="2.4" y="11" width="1.6" height="1" fill="#fff"/><rect x="1.6" y="14" width="1.6" height="1" fill="#6e6e6e"/><rect x="2.4" y="15" width="1.6" height="1" fill="#fff"/><rect x="1.6" y="18" width="1.6" height="1" fill="#6e6e6e"/><rect x="2.4" y="19" width="1.6" height="1" fill="#fff"/><rect x="1.6" y="22" width="1.6" height="1" fill="#6e6e6e"/><rect x="2.4" y="23" width="1.6" height="1" fill="#fff"/><rect x="1.6" y="26" width="1.6" height="1" fill="#6e6e6e"/><rect x="2.4" y="27" width="1.6" height="1" fill="#fff"/></svg>


<!-- ===== sidebar ===== -->

<div class="abs" style="left:896px;top:124px;width:276px;height:577px;background:#ededed"></div>
<div class="abs" style="left:897px;top:128px;width:235px;height:570px;border:1px solid #dcdcdc;background:#ececec"></div>
<div class="abs" style="left:898px;top:129px;width:233px;height:26px;background:#f0f0f0"></div>
<div class="abs" style="left:898px;top:155px;width:233px;height:25px;background:linear-gradient(#e3e3e3,#ededed)"></div>
<div class="abs" style="left:908px;top:135.300px;font-size:12px;font-weight:bold;line-height:15px;color:#111">Vlastnosti</div>
<svg style="left:1118px;top:139px" width="9" height="9" viewBox="0 0 9 9"><path d="M1 1L8 8M8 1L1 8" stroke="#383838" stroke-width="1.8" fill="none"/></svg>
<svg style="left:903px;top:164px" width="9" height="9" viewBox="0 0 9 9"><rect x="0.5" y="0.5" width="8" height="8" fill="#eaf0f7" stroke="#7f8da3" stroke-width="1"/><path d="M2.200 4.500H6.800" stroke="#222" stroke-width="1"/></svg>
<div class="abs" style="left:917px;top:162.400px;font-size:12px;font-weight:bold;line-height:15px;color:#222">Rozvržení</div>
<div class="abs" style="left:1014px;top:182px;width:116px;height:66px;border:1px solid #111"></div>
<svg style="left:925px;top:191px" width="62" height="47" viewBox="0 0 62 47"><rect x="0.5" y="0.5" width="60" height="46" fill="#fff" stroke="#7d7d7d" stroke-width="1"/><path d="M0 46.500H60.500V0.500" fill="none" stroke="#2e2e2e" stroke-width="1"/></svg>
<svg style="left:1041px;top:191px" width="62" height="47" viewBox="0 0 62 47"><rect x="0.5" y="0.5" width="60" height="46" fill="#fff" stroke="#7d7d7d" stroke-width="1"/><path d="M0 46.500H60.500V0.500" fill="none" stroke="#2e2e2e" stroke-width="1"/><rect x="5.5" y="4.4" width="50" height="8.2" fill="#fff" stroke="#c2c4cc" stroke-width="0.9"/><rect x="10" y="7" width="41" height="2.9" fill="#2178b5"/><rect x="5.5" y="17.5" width="50" height="25" fill="#fff" stroke="#c2c4cc" stroke-width="0.9"/><rect x="18" y="25" width="25" height="1.900" fill="#2178b5"/></svg>
<svg style="left:925px;top:257px" width="62" height="47" viewBox="0 0 62 47"><rect x="0.5" y="0.5" width="60" height="46" fill="#fff" stroke="#7d7d7d" stroke-width="1"/><path d="M0 46.500H60.500V0.500" fill="none" stroke="#2e2e2e" stroke-width="1"/><rect x="5.5" y="4.4" width="50" height="8.2" fill="#fff" stroke="#c2c4cc" stroke-width="0.9"/><rect x="10" y="7" width="41" height="2.9" fill="#2178b5"/><rect x="5.5" y="17.5" width="50" height="25" fill="#fff" stroke="#c2c4cc" stroke-width="0.9"/></svg>
<svg style="left:1041px;top:257px" width="62" height="47" viewBox="0 0 62 47"><rect x="0.5" y="0.5" width="60" height="46" fill="#fff" stroke="#7d7d7d" stroke-width="1"/><path d="M0 46.500H60.500V0.500" fill="none" stroke="#2e2e2e" stroke-width="1"/><rect x="5.5" y="4.4" width="50" height="8.2" fill="#fff" stroke="#c2c4cc" stroke-width="0.9"/><rect x="10" y="7" width="41" height="2.9" fill="#2178b5"/><rect x="5.5" y="17.5" width="23" height="25" fill="#fff" stroke="#c2c4cc" stroke-width="0.9"/><rect x="32.5" y="17.5" width="23" height="25" fill="#fff" stroke="#c2c4cc" stroke-width="0.9"/></svg>
<svg style="left:925px;top:323px" width="62" height="47" viewBox="0 0 62 47"><rect x="0.5" y="0.5" width="60" height="46" fill="#fff" stroke="#7d7d7d" stroke-width="1"/><path d="M0 46.500H60.500V0.500" fill="none" stroke="#2e2e2e" stroke-width="1"/><rect x="5.5" y="4.4" width="50" height="8.2" fill="#fff" stroke="#c2c4cc" stroke-width="0.9"/><rect x="10" y="7" width="41" height="2.9" fill="#2178b5"/></svg>
<svg style="left:1041px;top:323px" width="62" height="47" viewBox="0 0 62 47"><rect x="0.5" y="0.5" width="60" height="46" fill="#fff" stroke="#7d7d7d" stroke-width="1"/><path d="M0 46.500H60.500V0.500" fill="none" stroke="#2e2e2e" stroke-width="1"/><rect x="5.5" y="4.5" width="50" height="38" fill="#fff" stroke="#c2c4cc" stroke-width="0.9"/><rect x="17" y="20" width="27" height="1.800" fill="#2178b5"/><rect x="22" y="25" width="17" height="1.800" fill="#2178b5"/></svg>
<svg style="left:925px;top:389px" width="62" height="47" viewBox="0 0 62 47"><rect x="0.5" y="0.5" width="60" height="46" fill="#fff" stroke="#7d7d7d" stroke-width="1"/><path d="M0 46.500H60.500V0.500" fill="none" stroke="#2e2e2e" stroke-width="1"/><rect x="5.5" y="4.4" width="50" height="8.2" fill="#fff" stroke="#c2c4cc" stroke-width="0.9"/><rect x="10" y="7" width="41" height="2.9" fill="#2178b5"/><rect x="5.5" y="17.5" width="23" height="11" fill="#fff" stroke="#c2c4cc" stroke-width="0.9"/><rect x="5.5" y="31.5" width="23" height="11" fill="#fff" stroke="#c2c4cc" stroke-width="0.9"/><rect x="32.5" y="17.5" width="23" height="25" fill="#fff" stroke="#c2c4cc" stroke-width="0.9"/></svg>
<svg style="left:1041px;top:389px" width="62" height="47" viewBox="0 0 62 47"><rect x="0.5" y="0.5" width="60" height="46" fill="#fff" stroke="#7d7d7d" stroke-width="1"/><path d="M0 46.500H60.500V0.500" fill="none" stroke="#2e2e2e" stroke-width="1"/><rect x="5.5" y="4.4" width="50" height="8.2" fill="#fff" stroke="#c2c4cc" stroke-width="0.9"/><rect x="10" y="7" width="41" height="2.9" fill="#2178b5"/><rect x="5.5" y="17.5" width="23" height="25" fill="#fff" stroke="#c2c4cc" stroke-width="0.9"/><rect x="32.5" y="17.5" width="23" height="11" fill="#fff" stroke="#c2c4cc" stroke-width="0.9"/><rect x="32.5" y="31.5" width="23" height="11" fill="#fff" stroke="#c2c4cc" stroke-width="0.9"/></svg>
<svg style="left:925px;top:455px" width="62" height="47" viewBox="0 0 62 47"><rect x="0.5" y="0.5" width="60" height="46" fill="#fff" stroke="#7d7d7d" stroke-width="1"/><path d="M0 46.500H60.500V0.500" fill="none" stroke="#2e2e2e" stroke-width="1"/><rect x="5.5" y="4.4" width="50" height="8.2" fill="#fff" stroke="#c2c4cc" stroke-width="0.9"/><rect x="10" y="7" width="41" height="2.9" fill="#2178b5"/><rect x="5.5" y="17.5" width="23" height="11" fill="#fff" stroke="#c2c4cc" stroke-width="0.9"/><rect x="32.5" y="17.5" width="23" height="11" fill="#fff" stroke="#c2c4cc" stroke-width="0.9"/><rect x="5.5" y="31.5" width="50" height="11" fill="#fff" stroke="#c2c4cc" stroke-width="0.9"/></svg>
<svg style="left:1041px;top:455px" width="62" height="47" viewBox="0 0 62 47"><rect x="0.5" y="0.5" width="60" height="46" fill="#fff" stroke="#7d7d7d" stroke-width="1"/><path d="M0 46.500H60.500V0.500" fill="none" stroke="#2e2e2e" stroke-width="1"/><rect x="5.5" y="4.4" width="50" height="8.2" fill="#fff" stroke="#c2c4cc" stroke-width="0.9"/><rect x="10" y="7" width="41" height="2.9" fill="#2178b5"/><rect x="5.5" y="17.5" width="50" height="11" fill="#fff" stroke="#c2c4cc" stroke-width="0.9"/><rect x="5.5" y="31.5" width="50" height="11" fill="#fff" stroke="#c2c4cc" stroke-width="0.9"/></svg>
<svg style="left:925px;top:521px" width="62" height="47" viewBox="0 0 62 47"><rect x="0.5" y="0.5" width="60" height="46" fill="#fff" stroke="#7d7d7d" stroke-width="1"/><path d="M0 46.500H60.500V0.500" fill="none" stroke="#2e2e2e" stroke-width="1"/><rect x="5.5" y="4.4" width="50" height="8.2" fill="#fff" stroke="#c2c4cc" stroke-width="0.9"/><rect x="10" y="7" width="41" height="2.9" fill="#2178b5"/><rect x="5.5" y="17.5" width="23" height="11" fill="#fff" stroke="#c2c4cc" stroke-width="0.9"/><rect x="32.5" y="17.5" width="23" height="11" fill="#fff" stroke="#c2c4cc" stroke-width="0.9"/><rect x="5.5" y="31.5" width="23" height="11" fill="#fff" stroke="#c2c4cc" stroke-width="0.9"/><rect x="32.5" y="31.5" width="23" height="11" fill="#fff" stroke="#c2c4cc" stroke-width="0.9"/></svg>
<svg style="left:1041px;top:521px" width="62" height="47" viewBox="0 0 62 47"><rect x="0.5" y="0.5" width="60" height="46" fill="#fff" stroke="#7d7d7d" stroke-width="1"/><path d="M0 46.500H60.500V0.500" fill="none" stroke="#2e2e2e" stroke-width="1"/><rect x="5.5" y="4.4" width="50" height="8.2" fill="#fff" stroke="#c2c4cc" stroke-width="0.9"/><rect x="10" y="7" width="41" height="2.9" fill="#2178b5"/><rect x="5.5" y="17.5" width="14" height="11" fill="#fff" stroke="#c2c4cc" stroke-width="0.9"/><rect x="5.5" y="31.5" width="14" height="11" fill="#fff" stroke="#c2c4cc" stroke-width="0.9"/><rect x="23.5" y="17.5" width="14" height="11" fill="#fff" stroke="#c2c4cc" stroke-width="0.9"/><rect x="23.5" y="31.5" width="14" height="11" fill="#fff" stroke="#c2c4cc" stroke-width="0.9"/><rect x="41.5" y="17.5" width="14" height="11" fill="#fff" stroke="#c2c4cc" stroke-width="0.9"/><rect x="41.5" y="31.5" width="14" height="11" fill="#fff" stroke="#c2c4cc" stroke-width="0.9"/></svg>

<!-- sidebar tab bar -->
<div class="abs" style="left:1132px;top:124px;width:40px;height:577px;background:#ececec"></div>
<svg style="left:1147px;top:139px" width="11" height="11" viewBox="0 0 11 11"><path d="M1 1.500H7M1 3.600H7M1 5.500H7" stroke="#334477" stroke-width="1.200" fill="none"/><path d="M4.700 6.900H10.200L7.450 10z" fill="#0e1840"/></svg>
<div class="abs" style="left:1141px;top:163px;width:23px;height:1px;background:#d6d6d6"></div>
<div class="abs" style="left:1136px;top:167px;width:32px;height:32px;border:1px solid #b9b9b9;border-radius:4px;background:#eaeaea"></div>
<svg style="left:0;top:0" width="1228" height="835" viewBox="0 0 1228 835"><g transform="translate(1152 183.2)"><g transform="rotate(-45) scale(.98)"><path d="M-2 -7V7A4.600 4.600 0 0 0 -4.400 12.300L-2.700 13.600V9.800L0 8.600L2.700 9.800V13.600L4.400 12.300A4.600 4.600 0 0 0 2 7V-7A4.600 4.600 0 0 0 4.400 -12.300L2.700 -13.600V-9.800L0 -8.600L-2.700 -9.800V-13.600L-4.400 -12.300A4.600 4.600 0 0 0 -2 -7z" fill="#f0f0f0" stroke="#8d8d8d" stroke-width="1"/></g></g>
<ellipse cx="1151.500" cy="227.500" rx="9.500" ry="1.600" fill="url(#dshadow)"/><g transform="translate(1141 206)"><rect x=".5" y=".5" width="20.500" height="16.500" fill="#fbfbfb" stroke="#9aa7c0" stroke-width=".9"/><rect x="2.500" y="2.300" width="16.500" height="2.200" fill="#4a86d8"/><path d="M2.500 7H19" stroke="#c9d3e6" stroke-width=".8"/><path d="M3.700 19.500V11.500L5.300 8.800L6.900 11.500V19.500z" fill="#1e73e0"/><path d="M4.400 10.300L5.300 8.800L6.200 10.300z" fill="#5a3a1a"/><path d="M8.900 19.500V11.500L10.500 8.800L12.100 11.500V19.500z" fill="#f2a213"/><path d="M9.600 10.300L10.500 8.800L11.400 10.300z" fill="#5a3a1a"/><path d="M14.100 19.500V11.500L15.700 8.800L17.300 11.500V19.500z" fill="#33d04a"/><path d="M14.800 10.300L15.700 8.800L16.600 10.300z" fill="#5a3a1a"/></g>
<ellipse cx="1151" cy="263.300" rx="9" ry="1.400" fill="url(#dshadow)"/><path d="M1156 243.500H1163.500M1158 246H1163.500M1159.500 253H1163.500M1158.500 255.500H1163.500M1157.500 258H1163.500M1158.500 260.500H1163" stroke="#f5b53a" stroke-width=".9"/><path d="M1150.8 242.1L1154.3 248.4L1161.5 249.8L1156.5 255.2L1157.4 262.4L1150.8 259.3L1144.2 262.4L1145.1 255.2L1140.1 249.8L1147.3 248.4z" fill="url(#dstar)" stroke="#eda31c" stroke-width="1.400" stroke-linejoin="round"/>
<ellipse cx="1152" cy="298" rx="9.500" ry="1.400" fill="url(#dshadow)"/><g transform="translate(1141 276)"><rect x=".5" y="3.500" width="10.500" height="14.500" fill="#fafafa" stroke="#9a9a9a" stroke-width=".8"/><path d="M2.500 6.500H8M2.500 8.500H8M2.500 14.500H6" stroke="#b5b5b5" stroke-width=".8"/><rect x="9.500" y=".5" width="12" height="20" fill="#fdfdfd" stroke="#8fb0d8" stroke-width=".8"/><rect x="11.500" y="2.500" width="9" height="1.800" fill="#4a90e0"/><path d="M11.500 6.300H20" stroke="#9fc0ea" stroke-width=".8"/><rect x="12" y="9.500" width="9" height="8" fill="#cfe3f7"/><path d="M12 17.500H21V15.500L18 14z" fill="#5bb840"/><path d="M15.500 14.500L18.200 11.500L20.800 14.500V17H15.500z" fill="#fff" stroke="#c77a2a" stroke-width=".5"/><rect x="17.500" y="14.800" width="1.500" height="2.200" fill="#e08a1a"/><path d="M3.500 9.500H9V7L14 11.500L9 16V13.500H3.500z" fill="#1a8fe0" stroke="#0c66b0" stroke-width=".7"/></g>
<circle cx="1152" cy="322.8" r="10.2" fill="url(#gpink)" stroke="#8b3c72" stroke-width="1.100"/><g transform="translate(1152 322.8) scale(0.9622641509433962) rotate(-36)"><path d="M0 -3V6.800" stroke="#fff" stroke-width="3.500" stroke-linecap="round"/><circle cx="0" cy="-4.500" r="4.300" fill="#fff"/><path d="M0 -9.500V-4.300" stroke="#cd8ca4" stroke-width="2.900"/></g>
<path d="M1148.85 351.6L1152.1499999999999 347.90000000000003L1155.4499999999998 351.6" fill="#fff" fill-opacity=".7" stroke="#777" stroke-width="1.100"/><rect x="1141.8999999999999" y="351.90000000000003" width="20.5" height="13.3" rx="1.800" fill="#e9a41e" stroke="#b97a0c" stroke-width="1.100"/><rect x="1142.8" y="352.8" width="18.7" height="11.5" rx="1" fill="none" stroke="#f9d27a" stroke-width=".7"/><rect x="1144.300" y="354.300" width="15.700" height="8.500" fill="url(#dsun2)"/><ellipse cx="1148.500" cy="362.800" rx="3.200" ry="2" fill="#fff6b8" fill-opacity=".95"/><path d="M1154.5 362.8V358.05M1154.5 359.0L1152.125 355.675M1154.5 358.52500000000003L1157.16 356.15000000000003M1153.17 357.1L1151.175 356.625M1155.925 357.29L1157.825 357.575M1154.5 358.05L1154.975 355.2" fill="none" stroke="#2a1c0a" stroke-width=".8"/>
<circle cx="1152" cy="393.4" r="10.3" fill="url(#gsilver)" stroke="#8e8e8e" stroke-width=".8"/><circle cx="1152" cy="393.4" r="7.9" fill="#fcfcfc" stroke="#a5a5a5" stroke-width=".9"/><path d="M1147.2 387.2L1153.2 392.5L1150.9 394.5z" fill="#e8222a"/><path d="M1156.8 399.59999999999997L1153.2 392.5L1150.9 394.5z" fill="#5b7fd0"/><path d="M1156.8 399.59999999999997L1153.2 392.5L1152 393.4z" fill="#b0529a"/>
</svg>


<div class="abs" style="left:56px;top:124px;width:1116px;height:1px;background:#f7f7f7"></div>
<!-- ===== drawing toolbar ===== -->

<div class="abs" style="left:56px;top:700px;width:1116px;height:38px;background:linear-gradient(#f6f6f6,#f3f3f3);border-top:1px solid #d2d2d2"></div>
<div class="abs" style="left:273px;top:700px;width:615px;height:1px;background:#efefef"></div>
<svg style="left:0;top:0" width="1228" height="835" viewBox="0 0 1228 835"><defs>
<linearGradient id="dblue" x1="0" y1="0" x2="0" y2="1"><stop offset="0" stop-color="#b1cbeb"/><stop offset="1" stop-color="#6a9ad6"/></linearGradient>
<linearGradient id="dT" x1="0" y1="0" x2="1" y2="0"><stop offset="0" stop-color="#8a8d8b"/><stop offset=".5" stop-color="#3d403e"/><stop offset="1" stop-color="#7b7e7c"/></linearGradient>
<linearGradient id="dsun" x1="0" y1="0" x2="0" y2="1"><stop offset="0" stop-color="#6d6d5f"/><stop offset=".45" stop-color="#d9962a"/><stop offset="1" stop-color="#f7c53a"/></linearGradient>
<linearGradient id="dsun2" x1="0" y1="0" x2="0" y2="1"><stop offset="0" stop-color="#6f9fd6"/><stop offset=".5" stop-color="#e8b35a"/><stop offset="1" stop-color="#f2a51c"/></linearGradient>
<linearGradient id="dstar" x1="0" y1="0" x2="0" y2="1"><stop offset="0" stop-color="#ffe98a"/><stop offset="1" stop-color="#f7b824"/></linearGradient>
<linearGradient id="dtube" x1="0" y1="0" x2="1" y2="1"><stop offset="0" stop-color="#f7d67a"/><stop offset=".6" stop-color="#c98f1f"/><stop offset="1" stop-color="#7a5410"/></linearGradient>
<radialGradient id="dshadow" cx=".5" cy=".5" r=".5"><stop offset="0" stop-color="#000" stop-opacity=".28"/><stop offset="1" stop-color="#000" stop-opacity="0"/></radialGradient>
</defs>
<rect x="60" y="709.3" width="1.300" height="1.300" fill="#9a9a9a"/><rect x="60" y="713.4" width="1.300" height="1.300" fill="#9a9a9a"/><rect x="60" y="717.6" width="1.300" height="1.300" fill="#9a9a9a"/><rect x="60" y="721.8" width="1.300" height="1.300" fill="#9a9a9a"/><rect x="60" y="725.9" width="1.300" height="1.300" fill="#9a9a9a"/><rect x="60" y="730.0" width="1.300" height="1.300" fill="#9a9a9a"/>
<rect x="68.500" y="704.500" width="30" height="30" rx="2" fill="#d4d9e1" stroke="#9ba2ae"/>
<path d="M77.500 710L77.500 725.500L81.300 722L84 728L86.700 726.800L84 721L89.500 721z" fill="#fff" stroke="#7e7e7e" stroke-width="1.100" stroke-linejoin="round"/>
<path d="M102.5 711V728" stroke="#fff" stroke-width="1"/><path d="M101.5 711V728" stroke="#000" stroke-opacity=".03" stroke-width="1"/>
<path d="M113.500 726.500L130.800 709.200" stroke="#1a1a1a" stroke-width="1.150"/>
<path d="M143 718.500H157" stroke="#111" stroke-width="1.200"/><path d="M155.500 715.300L162.300 718.500L155.500 721.700z" fill="#111"/>
<ellipse cx="184" cy="727.8" rx="12" ry="1.6" fill="url(#dshadow)"/><rect x="173.500" y="712.500" width="21" height="13" fill="url(#dblue)" stroke="#2f64ab" stroke-width="1"/>
<ellipse cx="215" cy="728.3" rx="12" ry="1.6" fill="url(#dshadow)"/><ellipse cx="215" cy="718.900" rx="10.800" ry="7.400" fill="url(#dblue)" stroke="#2f64ab" stroke-width="1"/>
<ellipse cx="246" cy="729.3" rx="9" ry="1.3" fill="url(#dshadow)"/><g transform="translate(237 709)"><path d="M.6 .5H17.800V5.500H16.300C16 3.800 15.300 3 13.500 3H11.300V17C11.300 18.300 12 18.700 13.800 18.700V20H4.600V18.700C6.400 18.700 7.100 18.300 7.100 17V3H4.900C3.100 3 2.400 3.800 2.100 5.500H.6z" fill="url(#dT)" stroke="#555856" stroke-width=".7"/></g>
<path d="M265.5 711V728" stroke="#fff" stroke-width="1"/><path d="M264.5 711V728" stroke="#000" stroke-opacity=".03" stroke-width="1"/>
<g transform="translate(275 708)"><path d="M1 20.500C5 16 12 16 19 18.500C14 20.500 6 21.500 1 20.500z" fill="#4a86c8" fill-opacity=".75"/><path d="M2.200 18.800L4 13.200L14.200 2.500L18.300 6.300L8 17z" fill="#f4a428" stroke="#b8701a" stroke-width=".8"/><path d="M5.500 13L15 3.500M7 15.500L17 5.500" stroke="#fbd27a" stroke-width=".9"/><path d="M2.200 18.800L4 13.200L8 17z" fill="#f1dcb8" stroke="#9a7a4a" stroke-width=".6"/><path d="M2.200 18.800L2.900 16.700L4.300 18z" fill="#222"/><path d="M13.200 3.500L17.300 7.300L18.800 5.700L14.700 1.900z" fill="#c9c9c9" stroke="#8a8a8a" stroke-width=".5"/><path d="M14.700 1.900L16 .7C17 .0 18.300 .4 19.300 1.400S20.500 3.800 19.800 4.600L18.800 5.700z" fill="#ee1c2e"/></g>
<path d="M302.6 717h6l-3 3.600z" fill="#0a0a0a"/>
<path d="M320.500 711.500H326.500V725.500H331.500" fill="none" stroke="#111" stroke-width="1.400"/><rect x="317.300" y="709.300" width="4" height="4" rx="1.200" fill="#fff" stroke="#111" stroke-width="1.100"/><rect x="331.700" y="723.500" width="4" height="4" rx="1.200" fill="#fff" stroke="#111" stroke-width="1.100"/>
<path d="M344.4 717h6l-3 3.600z" fill="#0a0a0a"/>
<ellipse cx="369" cy="729.8" rx="10" ry="1.5" fill="url(#dshadow)"/><path d="M369 708.500L379.700 718.900L369 729.300L358.300 718.900z" fill="url(#dblue)" stroke="#2f64ab" stroke-width="1"/>
<path d="M386.6 717h6l-3 3.600z" fill="#0a0a0a"/>
<ellipse cx="411" cy="729.8" rx="11" ry="1.5" fill="url(#dshadow)"/><circle cx="411" cy="718.700" r="10.400" fill="url(#dblue)" stroke="#2f64ab" stroke-width="1"/><circle cx="407.600" cy="715.500" r="1.250" fill="#2b5ea3"/><circle cx="414.400" cy="715.500" r="1.250" fill="#2b5ea3"/><path d="M405.300 721.500C408 725.300 414 725.300 416.700 721.500" fill="none" stroke="#2b5ea3" stroke-width="1.100"/>
<path d="M428.7 717h6l-3 3.600z" fill="#0a0a0a"/>
<ellipse cx="453" cy="727.8" rx="10" ry="1.4" fill="url(#dshadow)"/><path d="M442.700 718.700L449.500 712.300V716H456.500V712.300L463.300 718.700L456.500 725.100V721.400H449.500V725.100z" fill="url(#dblue)" stroke="#2f64ab" stroke-width="1"/>
<path d="M470.7 717h6l-3 3.600z" fill="#0a0a0a"/>
<rect x="484.500" y="708.500" width="21" height="21" fill="url(#dblue)" stroke="#2f64ab" stroke-width="1"/><path d="M490.200 708.500V729.500M484.500 714.400H505.500" stroke="#2f64ab" stroke-width="1"/>
<path d="M512.8 717h6l-3 3.600z" fill="#0a0a0a"/>
<ellipse cx="538" cy="729.5" rx="11" ry="1.4" fill="url(#dshadow)"/><path d="M529.500 708.600H544.500Q547.500 708.600 547.500 711.600V720.300Q547.500 723.300 544.500 723.300H536.500L527.300 729L531.500 723.300H529.500Q526.600 723.300 526.600 720.300V711.600Q526.600 708.600 529.500 708.600z" fill="url(#dblue)" stroke="#2f64ab" stroke-width="1"/>
<path d="M554.8 717h6l-3 3.600z" fill="#0a0a0a"/>
<ellipse cx="579" cy="730" rx="10" ry="1.3" fill="url(#dshadow)"/><path d="M579.0 708.9L581.6 716.6L589.7 716.7L583.3 721.6L585.6 729.3L579.0 724.7L572.4 729.3L574.7 721.6L568.3 716.7L576.4 716.6z" fill="url(#dblue)" stroke="#2f64ab" stroke-width="1"/>
<path d="M596.8 717h6l-3 3.600z" fill="#0a0a0a"/>
<path d="M609.5 711V728" stroke="#fff" stroke-width="1"/><path d="M608.5 711V728" stroke="#000" stroke-opacity=".03" stroke-width="1"/>
<path d="M620.3 710.2L630.5 708.5L637.5 715.6L634.4 728.2L618.4 726.4L624.2 720.5z" fill="none" stroke="#111" stroke-width="1.200"/><rect x="618.9" y="708.8000000000001" width="2.800" height="2.800" fill="#fff" stroke="#111" stroke-width=".9"/><rect x="629.1" y="707.1" width="2.800" height="2.800" fill="#fff" stroke="#111" stroke-width=".9"/><rect x="636.1" y="714.2" width="2.800" height="2.800" fill="#fff" stroke="#111" stroke-width=".9"/><rect x="633.0" y="726.8000000000001" width="2.800" height="2.800" fill="#fff" stroke="#111" stroke-width=".9"/><rect x="617.0" y="725.0" width="2.800" height="2.800" fill="#fff" stroke="#111" stroke-width=".9"/><rect x="622.8000000000001" y="719.1" width="2.800" height="2.800" fill="#fff" stroke="#111" stroke-width=".9"/>
<g transform="translate(655.500 727) rotate(35)"><path d="M-4.300 -10.500H4.300L1.600 -3H-1.600z" fill="#d4d4d4" stroke="#2a2a2a" stroke-width="1"/><rect x="-1.300" y="-3.200" width="2.600" height="3.200" fill="#b5b5b5" stroke="#2a2a2a" stroke-width=".7"/><rect x="-4.600" y="-19.500" width="9.200" height="9.500" fill="url(#dtube)" stroke="#1f1503" stroke-width="1.100"/><rect x="-4.600" y="-13" width="9.200" height="2.500" fill="#e31b23"/><rect x="-5.800" y="-22.300" width="11.600" height="3.200" rx="1.500" fill="#e0b040" stroke="#1f1503" stroke-width="1.100"/></g><circle cx="653.700" cy="729.300" r="1.900" fill="#2f7fd0" stroke="#1c4f8f" stroke-width=".6"/><circle cx="653.200" cy="728.700" r=".7" fill="#bfe0ff"/>
<path d="M680.0 711V728" stroke="#fff" stroke-width="1"/><path d="M679.0 711V728" stroke="#000" stroke-opacity=".03" stroke-width="1"/>
<path d="M695.7 712.3L699.0 708.6L702.3 712.3" fill="#fff" fill-opacity=".7" stroke="#777" stroke-width="1.100"/><rect x="688.6" y="712.6" width="20.8" height="13.5" rx="1.800" fill="#e9a41e" stroke="#b97a0c" stroke-width="1.100"/><rect x="689.5" y="713.5" width="19" height="11.7" rx="1" fill="none" stroke="#f9d27a" stroke-width=".7"/><rect x="691" y="715" width="16" height="8.700" fill="#fdfdfd" stroke="#b97a0c" stroke-width=".5"/><text x="699" y="723.300" text-anchor="middle" font-family="Liberation Sans" font-weight="bold" font-size="10" fill="#c4143c">A</text>
<rect x="719.900" y="712" width="20.600" height="13.200" rx="1.500" fill="#f6f6f6" stroke="#9d9d9d" stroke-width="1"/><rect x="722" y="714" width="16.400" height="9.200" fill="url(#dsun)"/><ellipse cx="726.500" cy="723.200" rx="3.200" ry="2.200" fill="#fff3a8" fill-opacity=".9"/><path d="M733 723.2V718.45M733 719.4000000000001L730.625 716.075M733 718.9250000000001L735.66 716.5500000000001M731.67 717.5L729.675 717.0250000000001M734.425 717.69L736.325 717.975M733 718.45L733.475 715.6" fill="none" stroke="#3a2a12" stroke-width=".8"/>
<path d="M757.7 712.3L761.0 708.6L764.3 712.3" fill="#fff" fill-opacity=".7" stroke="#777" stroke-width="1.100"/><rect x="750.6" y="712.6" width="20.8" height="13.5" rx="1.800" fill="#e9a41e" stroke="#b97a0c" stroke-width="1.100"/><rect x="751.5" y="713.5" width="19" height="11.7" rx="1" fill="none" stroke="#f9d27a" stroke-width=".7"/><rect x="753" y="715" width="16" height="8.700" fill="url(#dsun2)"/><ellipse cx="757.500" cy="723.700" rx="3.300" ry="2.100" fill="#fff6b8" fill-opacity=".95"/><path d="M763.3 723.7V718.95M763.3 719.9000000000001L760.925 716.575M763.3 719.4250000000001L765.9599999999999 717.0500000000001M761.9699999999999 718.0L759.9749999999999 717.5250000000001M764.7249999999999 718.19L766.625 718.475M763.3 718.95L763.775 716.1" fill="none" stroke="#2a1c0a" stroke-width=".8"/>
<path d="M781.0 711V728" stroke="#fff" stroke-width="1"/><path d="M780.0 711V728" stroke="#000" stroke-opacity=".03" stroke-width="1"/>
<g transform="translate(789 710)"><path d="M7 .5H19L21.500 4.500V18.500H4.500V4.500z" fill="#d9d9d9" stroke="#cbcbcb" stroke-width=".8"/><path d="M5 5.500H21.500V18.500H5z" fill="#d2d2d2"/><path d="M.5 10.500H6V8.300L10 12.500L6 16.700V14.500H.5z" fill="#e9e9e9" stroke="#d3d3d3" stroke-width=".7"/></g>
</svg>


<!-- ===== status bar ===== -->

<div class="abs" style="left:56px;top:737px;width:1116px;height:18px;background:#ebebeb"></div>
<div class="abs" style="left:56px;top:737px;width:1106px;height:1px;background:#cdcdcd"></div>
<div class="abs ssep" style="left:304px"></div>
<div class="abs ssep" style="left:717px"></div>
<div class="abs ssep" style="left:739px"></div>
<div class="abs ssep" style="left:767px"></div>
<div class="abs ssep" style="left:848px"></div>
<div class="abs ssep" style="left:952px"></div>
<div class="abs ssep" style="left:975px"></div>
<div class="abs ssep" style="left:1118px"></div>
<div class="abs st" style="left:334px">-6,78 / 5,51</div>
<div class="abs st" style="left:538px">0,00 x 0,00</div>
<div class="abs st" style="left:776px">Snímek 1 / 1</div>
<div class="abs st" style="left:856px">Výchozí</div>
<div class="abs st" style="left:1125px">41 %</div>
<svg style="left:0;top:0" width="1228" height="835" viewBox="0 0 1228 835"><path d="M317.500 741V750M313.500 745.500H322" stroke="#2a1ae0" stroke-width="1.100" stroke-dasharray="3.500 1" /><path d="M317.500 750.500V751.500H327.500V745.500H322.500" fill="none" stroke="#111" stroke-width="1.100" stroke-dasharray="1.100 1.100"/>
<path d="M522.500 744.500H530.500V751.500H522.500z" fill="none" stroke="#111" stroke-width="1.100" stroke-dasharray="1 1"/><path d="M522 741l2.400 1.200L522 743.400zM531 741l-2.400 1.200L531 743.400z" fill="#111"/><path d="M524.500 742.200H528.500" stroke="#111" stroke-width=".9" stroke-dasharray="1 1"/><path d="M517 745l1.200 2.200l1.200 -2.200zM517 751.800l1.200 -2.200l1.200 2.200z" fill="#111"/>
<path d="M732.500 746.500V751.500H724.500V741.500H732.500V742.500" fill="none" stroke="#808080" stroke-width="1.100"/><path d="M727 746L729.300 748.500L734.200 742.800" fill="none" stroke="#8a8a8a" stroke-width="1.200"/>
<path d="M964.500 741.300V752.100M959.100 746.700H969.900" stroke="#1a1a1a" stroke-width="1.500"/><path d="M964.500 740.300l2.600 3h-5.200zM964.500 753.100l2.600 -3h-5.200zM958.100 746.700l3 -2.600v5.200zM970.900 746.700l-3 -2.600v5.200z" fill="#1a1a1a"/>
<path d="M985 746.7H992.8" stroke="#868686" stroke-width="2"/><path d="M998.6 746.7H1095.4" stroke="#c9c9c9" stroke-width="1.9"/><path d="M1046.1 742.3V751.6" stroke="#bebebe" stroke-width="1.9"/><circle cx="1016.8" cy="746.7" r="3.9" fill="#fff" stroke="#808080" stroke-width="1.2"/><path d="M1102.2 746.7H1110M1106.1 742.8V750.6" stroke="#868686" stroke-width="2"/>
</svg>


</div></div>
</body>
</html>
